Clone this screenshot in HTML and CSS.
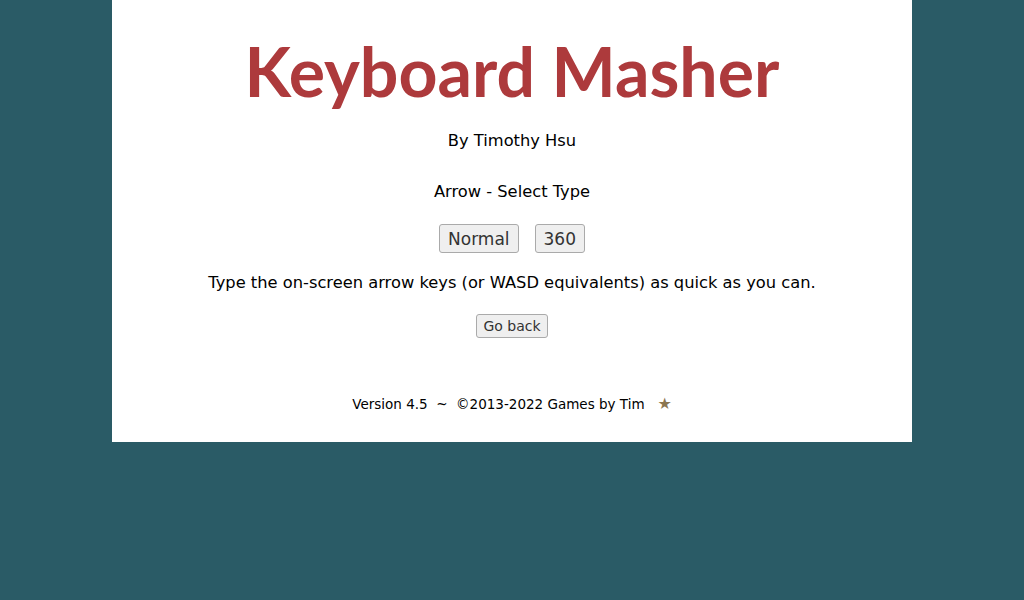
FILE: index.html
```html
<!DOCTYPE html>
<html>
<head>
<meta charset="utf-8">
<link rel="stylesheet" href="styles.css">
</head>
<body>
<main class="page">
  <h1 class="title">Keyboard Masher</h1>
  <p class="author">By Timothy Hsu</p>
  <p class="mode">Arrow - Select Type</p>
  <div class="choices">
    <button class="choice">Normal</button>
    <button class="choice">360</button>
  </div>
  <p class="instructions">Type the on-screen arrow keys (or WASD equivalents) as quick as you can.</p>
  <div class="back-row"><button class="back">Go back</button></div>
  <footer class="footer">Version 4.5 &nbsp;~&nbsp; ©2013-2022 Games by Tim &nbsp; <span class="star">★</span></footer>
</main>
</body>
</html>
```

FILE: styles.css
```css
html, body {
  margin: 0;
  padding: 0;
}
body {
  background: #2a5b66;
  font-family: "DejaVu Sans", Verdana, sans-serif;
  font-size: 16.3px;
  color: #000;
}
.page {
  width: 800px;
  margin: 0 auto;
  background: #fff;
  text-align: center;
  padding: 31px 0 27px;
  box-sizing: border-box;
  height: 442px;
}
.title {
  font-family: Lato, "Open Sans", sans-serif;
  font-weight: 700;
  font-size: 68px;
  line-height: 80px;
  color: #ad3a3c;
  margin: 0;
}
.author {
  margin: 18px 0 0;
  line-height: 24px;
}
.mode {
  margin: 27px 0 0;
  line-height: 24px;
}
.choices {
  margin-top: 20px;
  display: flex;
  justify-content: center;
  gap: 16px;
}
.choice {
  font-family: "DejaVu Sans", sans-serif;
  font-size: 17px;
  color: #333;
  background: #efefef;
  border: 1px solid #aaa;
  border-radius: 3px;
  padding: 2px 8px;
  height: 29px;
}
.instructions {
  margin: 18px 0 0;
  line-height: 24px;
}
.back-row {
  margin-top: 19px;
}
.back {
  font-family: "DejaVu Sans", sans-serif;
  font-size: 14px;
  height: 24px;
  background: #efefef;
  border: 1px solid #aaa;
  border-radius: 3px;
  color: #333;
  padding: 1px 6px;
}
.footer {
  margin-top: 56px;
  font-size: 13.5px;
  line-height: 20px;
}
.star {
  color: #8b7650;
  font-size: 16px;
}
```
